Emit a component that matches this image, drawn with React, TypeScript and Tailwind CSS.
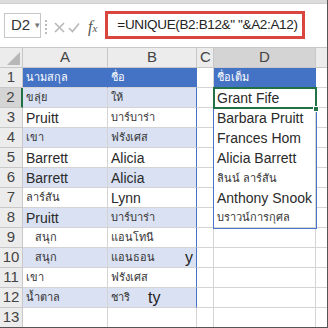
import React from "react";

const FONT = { fontFamily: '"Liberation Sans", "Noto Sans", "DejaVu Sans", sans-serif' };

type Row = { a?: string; b?: string; bTail?: string; tailGap?: string; d?: string; indent?: boolean };

const rows: Row[] = [
  { a: "นามสกุล", b: "ชื่อ", d: "ชื่อเต็ม" },
  { a: "ขลุ่ย", b: "ให้", d: "Grant Fife" },
  { a: "Pruitt", b: "บาร์บาร่า", d: "Barbara Pruitt" },
  { a: "เขา", b: "ฟรังเศส", d: "Frances Hom" },
  { a: "Barrett", b: "Alicia", d: "Alicia Barrett" },
  { a: "Barrett", b: "Alicia", d: "ลินน์ ลาร์สัน" },
  { a: "ลาร์สัน", b: "Lynn", d: "Anthony Snook" },
  { a: "Pruitt", b: "บาร์บาร่า", d: "บราวน์การกุศล" },
  { a: "สนุก", b: "แอนโทนี", indent: true },
  { a: "สนุก", b: "แอนธอน", bTail: "y", tailGap: "ml-[30px]", indent: true },
  { a: "เขา", b: "ฟรังเศส" },
  { a: "น้ำตาล", b: "ชาริ", bTail: "ty", tailGap: "ml-[18px]" },
  {},
];

const isLatin = (s?: string) => !!s && /^[A-Za-z ]+$/.test(s);

const CellText = ({ text, white }: { text?: string; white?: boolean }) => {
  if (!text) return null;
  return isLatin(text) ? (
    <span className={`text-[14px] leading-none ${white ? "text-white" : "text-[#2a2a2a]"}`}>{text}</span>
  ) : (
    <span className={`text-[11px] leading-none ${white ? "text-white" : "text-[#333]"}`}>{text}</span>
  );
};

export default function App() {
  return (
    <div className="w-[328px] h-[328px] overflow-hidden bg-white border-r border-b border-[#555] relative" style={FONT}>
      {/* ribbon edge */}
      <div className="h-[4px] bg-[#dcdcdc] border-b border-[#cfcfcf]" />

      {/* formula bar */}
      <div className="h-[43px] flex items-start pt-[7px] pl-[4px]">
        <div className="w-[37px] h-[25px] border border-[#c6c6c6] flex items-center pl-[6px] mt-[2px]">
          <span className="text-[15px] text-[#333]">D2</span>
          <span className="text-[8px] text-[#777] ml-[3px]">▼</span>
        </div>
        <div className="ml-[4px] mt-[9px] flex flex-col gap-[2px]">
          <div className="w-[2px] h-[2px] bg-[#bbb]" />
          <div className="w-[2px] h-[2px] bg-[#bbb]" />
          <div className="w-[2px] h-[2px] bg-[#bbb]" />
          <div className="w-[2px] h-[2px] bg-[#bbb]" />
        </div>
        <div className="ml-[7px] mt-[8px] flex items-center gap-[3px]">
          <svg width="11" height="11" viewBox="0 0 11 11">
            <path d="M1 1 L10 10 M10 1 L1 10" stroke="#b8b8b8" strokeWidth="1.6" />
          </svg>
          <svg width="12" height="11" viewBox="0 0 12 11">
            <path d="M1 6 L4.5 9.5 L11 1.5" stroke="#b8b8b8" strokeWidth="1.6" fill="none" />
          </svg>
          <span
            className="ml-[5px] text-[16px] italic text-[#555] leading-none"
            style={{ fontFamily: '"Liberation Serif", serif' }}
          >
            f<span className="text-[11px]">x</span>
          </span>
        </div>
        <div className="ml-[8px] w-[200px] h-[28px] border-[3px] border-[#d9453f] flex items-center pl-[9px]">
          <span className="text-[13.5px] text-[#222] tracking-[-0.35px] whitespace-pre">=UNIQUE(B2:B12&amp;" "&amp;A2:A12)</span>
        </div>
      </div>

      {/* column headers */}
      <div className="flex h-[21px] bg-[#ececec] border-t border-b border-[#c8c8c8]">
        <div className="w-[23px] border-r border-[#c8c8c8] flex items-end justify-end p-[2px]">
          <svg width="13" height="13" viewBox="0 0 13 13">
            <path d="M13 0 L13 13 L0 13 Z" fill="#b8b8b8" />
          </svg>
        </div>
        <div className="w-[85px] border-r border-[#c8c8c8] flex items-center justify-center text-[15px] text-[#444]">A</div>
        <div className="w-[89px] border-r border-[#c8c8c8] flex items-center justify-center text-[15px] text-[#444]">B</div>
        <div className="w-[17px] border-r border-[#c8c8c8] flex items-center pl-[3px] text-[15px] text-[#444] overflow-hidden">C</div>
        <div className="w-[102px] border-r border-[#c8c8c8] bg-[#d4d4d4] flex items-center justify-center text-[15px] text-[#444]">D</div>
        <div className="flex-1" />
      </div>

      {/* grid */}
      <div className="relative">
        {rows.map((r, i) => {
          const n = i + 1;
          const head = n === 1;
          const band = head ? "bg-[#4472c4]" : n <= 12 && n % 2 === 0 ? "bg-[#d9e1f2]" : "bg-white";
          const inSpill = n >= 2 && n <= 7;
          return (
            <div key={n} className="flex h-[20px]">
              <div
                className={`w-[23px] border-r border-b border-[#c8c8c8] flex items-center justify-center text-[15px] text-[#444] ${
                  n === 2 ? "bg-[#d4d4d4] border-r-[#217346] border-r-2" : "bg-[#ececec]"
                }`}
              >
                {n}
              </div>
              <div
                className={`w-[85px] border-r border-b border-[#d4d4d4] flex items-center ${band} ${
                  r.indent ? "pl-[12px]" : "pl-[3px]"
                } ${head ? "border-r-[#4472c4]" : ""}`}
              >
                <CellText text={r.a} white={head} />
              </div>
              <div
                className={`w-[89px] border-b border-r flex items-center pl-[3px] ${band} ${
                  n <= 12 ? "border-r-[#4472c4] border-b-[#d4d4d4]" : "border-[#d4d4d4]"
                }`}
              >
                <CellText text={r.b} white={head} />
                {r.bTail && <span className={`text-[16px] leading-none text-[#222] ${r.tailGap}`}>{r.bTail}</span>}
              </div>
              <div className="w-[17px] border-r border-b border-[#d4d4d4]" />
              <div
                className={`w-[102px] border-r flex items-center pl-[3px] ${
                  head ? "bg-[#4472c4] border-b border-[#4472c4]" : inSpill ? "border-[#d4d4d4]" : "border-b border-[#d4d4d4]"
                }`}
              >
                <CellText text={r.d} white={head} />
              </div>
              <div className="flex-1 border-b border-[#d4d4d4]" />
            </div>
          );
        })}

        {/* spill range outline */}
        <div className="absolute left-[213px] top-[20px] w-[104px] h-[141px] border border-[#4a74c9] pointer-events-none" />
        {/* active cell */}
        <div className="absolute left-[213px] top-[19px] w-[104px] h-[22px] border-2 border-[#217346] pointer-events-none" />
        <div className="absolute left-[313px] top-[38px] w-[6px] h-[6px] bg-[#217346] border border-white pointer-events-none" />
      </div>
    </div>
  );
}
